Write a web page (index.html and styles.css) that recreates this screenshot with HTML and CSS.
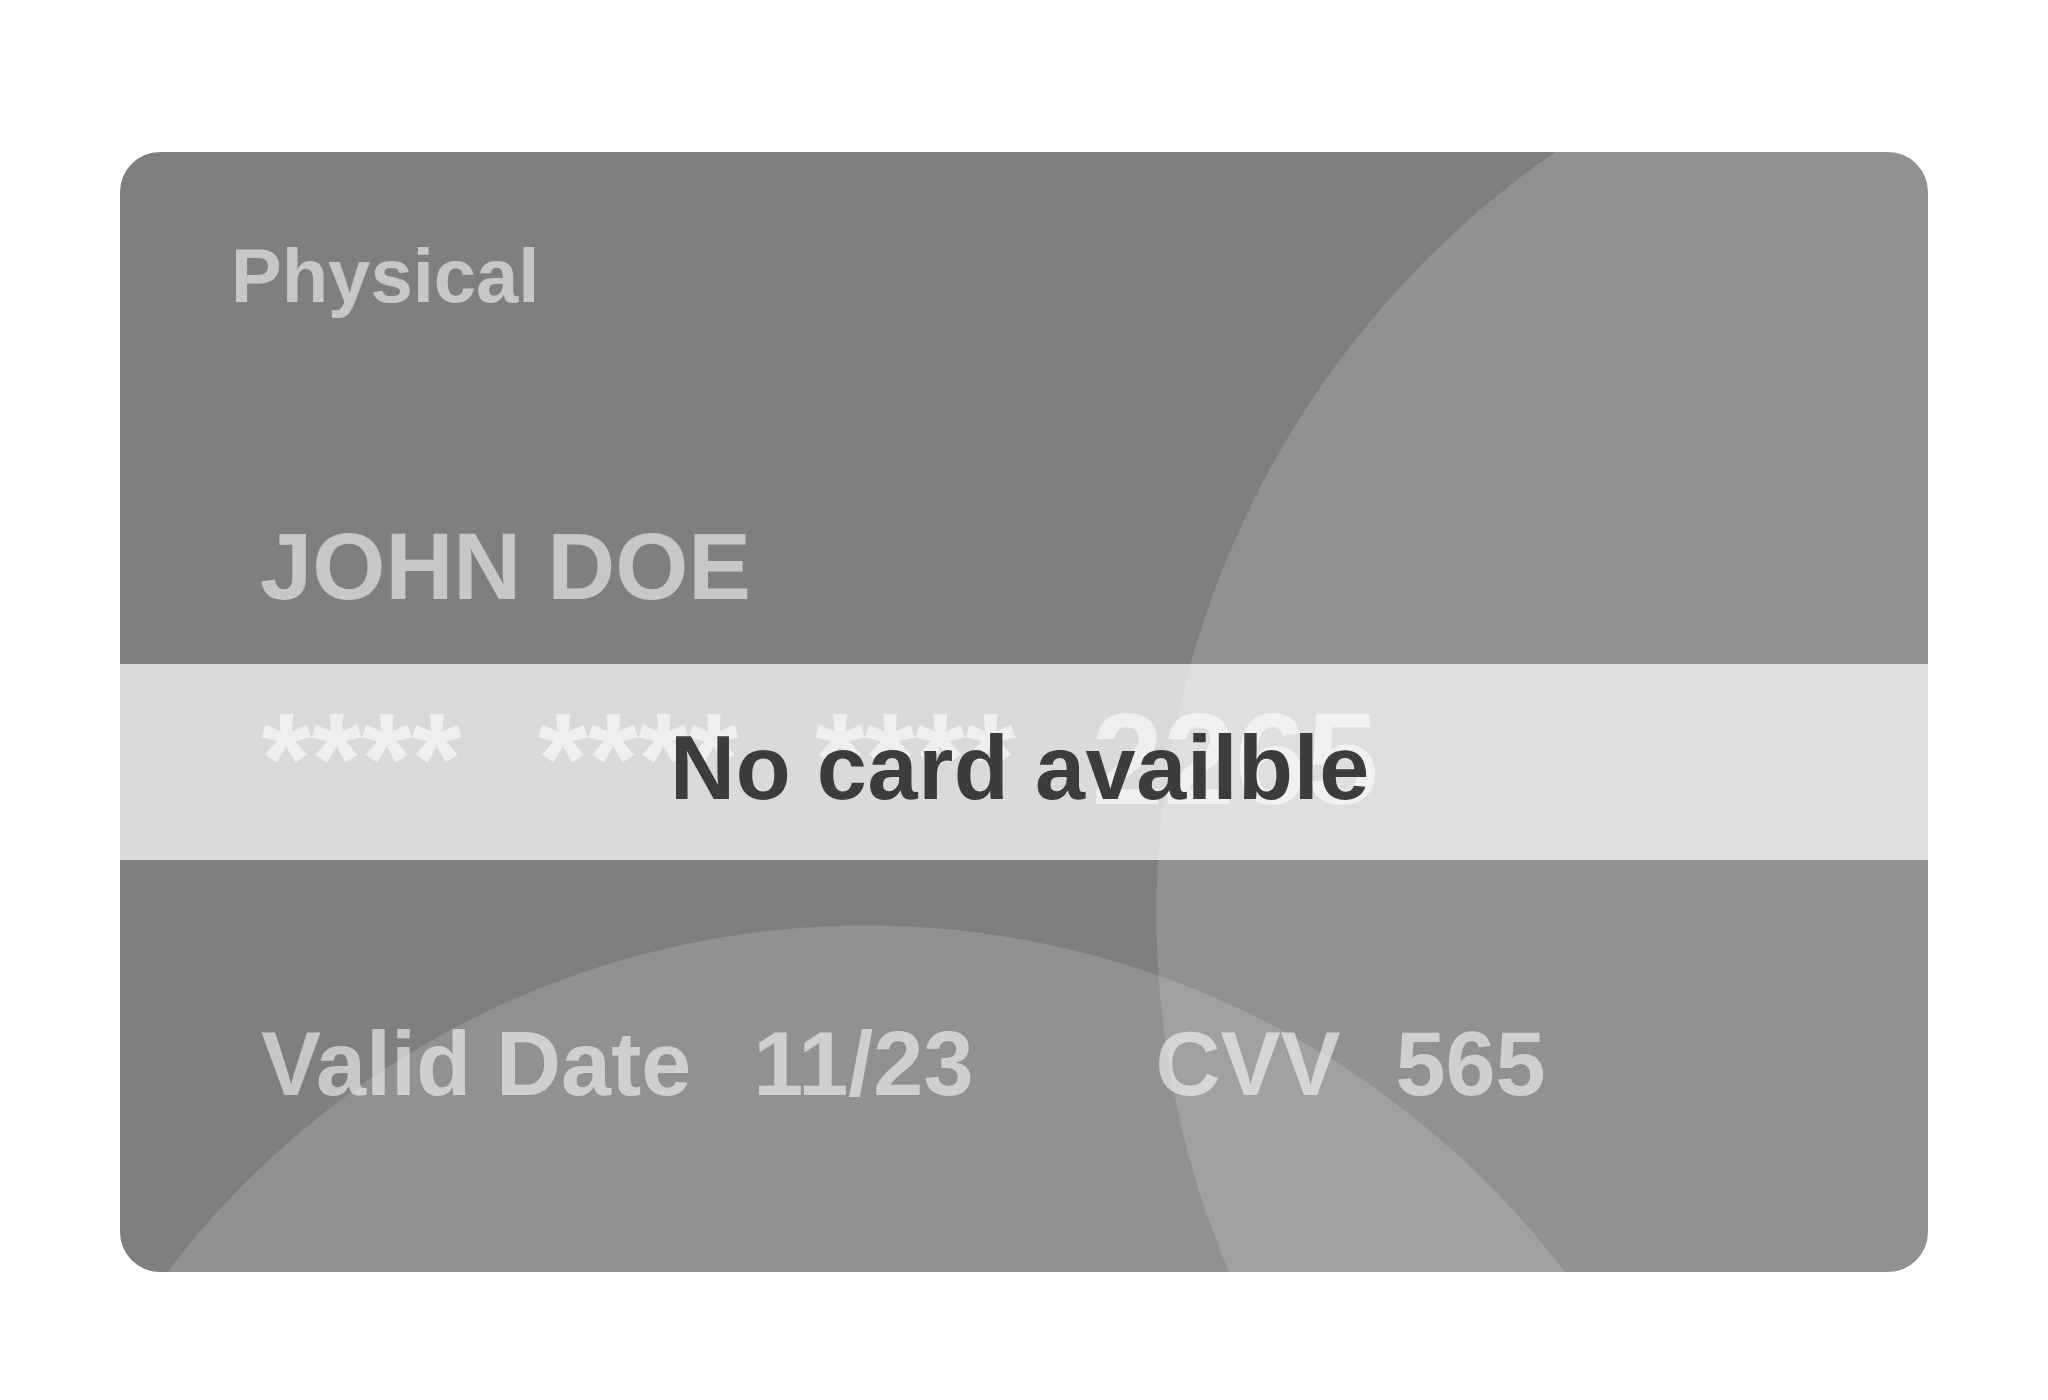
FILE: index.html
```html
<!DOCTYPE html>
<html lang="en">
<head>
<meta charset="utf-8">
<title>Card</title>
<link rel="stylesheet" href="styles.css">
</head>
<body>
  <div class="card">
    <div class="card-type">Physical</div>
    <div class="card-holder">JOHN DOE</div>
    <div class="card-number">
      <span>****</span><span>****</span><span>****</span><span>2265</span>
    </div>
    <div class="card-meta">
      <div class="meta-group valid">
        <span>Valid Date</span><span>11/23</span>
      </div>
      <div class="meta-group cvv">
        <span>CVV</span><span>565</span>
      </div>
    </div>
    <div class="card-overlay">No card availble</div>
  </div>
</body>
</html>
```

FILE: styles.css
```css
html, body {
  margin: 0;
  background: #ffffff;
}

body {
  padding: 152px 120px 0 120px;
  font-family: "Liberation Sans", Arial, sans-serif;
  font-weight: 700;
}

.card {
  position: relative;
  height: 1120px;
  box-sizing: border-box;
  padding-top: 86px;
  border-radius: 40px;
  overflow: hidden;
  background-color: #7e7f81;
  background-image:
    radial-gradient(circle 926px at 1962px 761px, rgba(255,255,255,0.14) calc(100% - 1px), rgba(255,255,255,0) 100%),
    radial-gradient(circle 878px at 746px 1651px, rgba(255,255,255,0.14) calc(100% - 1px), rgba(255,255,255,0) 100%);
  color: rgba(255,255,255,0.56);
  line-height: 1;
}

.card-type {
  margin-left: 111px;
  font-size: 76px;
}

.card-holder {
  margin-left: 140px;
  margin-top: 206px;
  font-size: 94px;
}

.card-number {
  display: flex;
  gap: 76px;
  margin-left: 141px;
  margin-top: 81px;
  font-size: 129px;
}

.card-meta {
  display: flex;
  gap: 182px;
  margin-left: 141px;
  margin-top: 195px;
  font-size: 90px;
}

.meta-group {
  display: flex;
}

.valid {
  gap: 62px;
}

.cvv {
  gap: 55px;
}

.card-overlay {
  position: absolute;
  left: 0;
  right: 0;
  top: 512px;
  height: 196px;
  box-sizing: border-box;
  padding-top: 12px;
  padding-right: 8px;
  display: flex;
  align-items: center;
  justify-content: center;
  background: rgba(255,255,255,0.71);
  color: #3c3c3c;
  font-size: 90px;
  letter-spacing: 0.6px;
}
```
